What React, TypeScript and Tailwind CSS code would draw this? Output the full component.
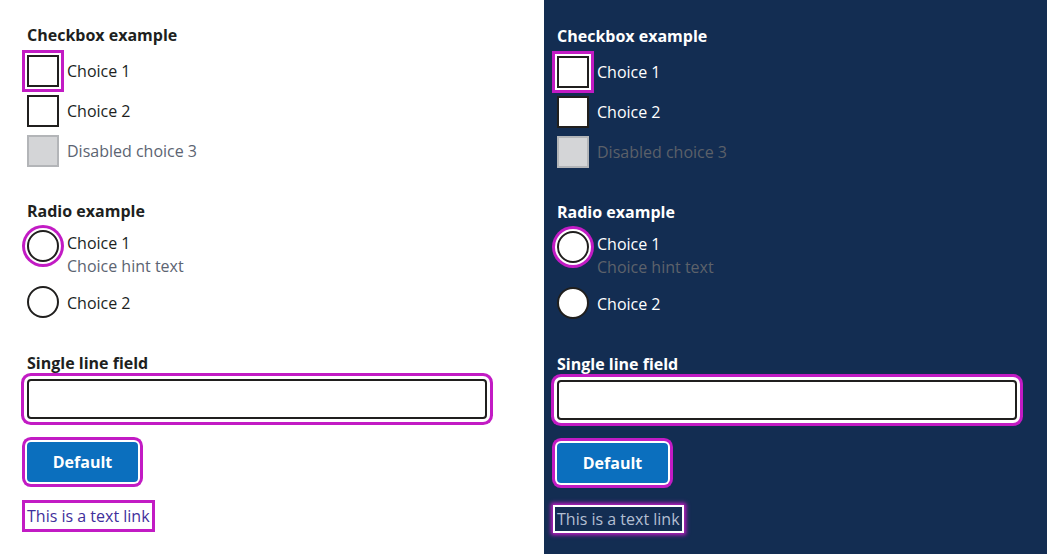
import React from "react";

function Checkbox({ label, focused, disabled, dark }: { label: string; focused?: boolean; disabled?: boolean; dark?: boolean }) {
  let box = "w-[32px] h-[32px] shrink-0 border-2 ";
  if (disabled) box += "bg-[#d4d5d7] border-[#b3b5b8]";
  else box += "bg-white border-[#201f1e]";
  if (focused) box += " shadow-[0_0_0_2px_#ffffff,0_0_0_5px_#c21bc4]";
  let text = "text-[16px] leading-[22px] ";
  if (disabled) text += dark ? "text-[#5b6069]" : "text-[#5c6472]";
  else text += dark ? "text-white" : "text-[#201f1e]";
  return (
    <div className="flex items-center gap-[8px] h-[32px]">
      <div className={box} />
      <span className={text}>{label}</span>
    </div>
  );
}

function Radio({ label, hint, focused, dark }: { label: string; hint?: string; focused?: boolean; dark?: boolean }) {
  let circ = "w-[32px] h-[32px] shrink-0 rounded-full border-2 border-[#201f1e] bg-white";
  if (focused) circ += " shadow-[0_0_0_2px_#ffffff,0_0_0_5px_#c21bc4]";
  return (
    <div className="flex items-start gap-[8px]">
      <div className={circ} />
      <div className={"flex flex-col " + (hint ? "pt-[2px]" : "pt-[6px]")}>
        <span className={"text-[16px] leading-[22px] " + (dark ? "text-white" : "text-[#201f1e]")}>{label}</span>
        {hint && (
          <span className={"text-[16px] leading-[24px] " + (dark ? "text-[#5d626b]" : "text-[#5c6472]")}>{hint}</span>
        )}
      </div>
    </div>
  );
}

function Panel({ dark }: { dark?: boolean }) {
  const head = "text-[16px] leading-[22px] font-bold " + (dark ? "text-white" : "text-[#201f1e]");
  return (
    <div
      className={
        "flex flex-col " +
        (dark ? "flex-1 bg-[#132d52] pl-[13px] pt-[25px]" : "w-[544px] bg-white pl-[27px] pt-[24px]")
      }
    >
      <div className={head}>Checkbox example</div>
      <div className="flex flex-col gap-[8px] mt-[9px]">
        <Checkbox label="Choice 1" focused dark={dark} />
        <Checkbox label="Choice 2" dark={dark} />
        <Checkbox label="Disabled choice 3" disabled dark={dark} />
      </div>
      <div className={head + " mt-[33px]"}>Radio example</div>
      <div className="flex flex-col gap-[8px] mt-[8px]">
        <Radio label="Choice 1" hint="Choice hint text" focused dark={dark} />
        <Radio label="Choice 2" dark={dark} />
      </div>
      <div className={head + " mt-[34px]"}>Single line field</div>
      <div className="mt-[5px] w-[460px] h-[40px] bg-white border-2 border-[#201f1e] rounded-[4px] shadow-[0_0_0_3px_#ffffff,0_0_0_6px_#c21bc4]" />
      <div className="mt-[23px]">
        <button className="w-[111px] h-[40px] rounded-[4px] bg-[#0b6fbe] text-white font-bold text-[16px] leading-[22px] shadow-[0_0_0_2px_#ffffff,0_0_0_5px_#c21bc4]">
          Default
        </button>
      </div>
      <div className={dark ? "mt-[22px] -ml-[4px]" : "mt-[18px] -ml-[5px]"}>
        {dark ? (
          <a className="inline-block border-2 border-white px-[2px] py-[1px] text-[16px] leading-[22px] text-[#b3bfd2] shadow-[0_0_4px_2px_#c21bc4] bg-[#132d52]">
            This is a text link
          </a>
        ) : (
          <a className="inline-block border-[3px] border-[#c21bc4] px-[2px] py-[2px] text-[16px] leading-[22px] text-[#3f2f9c]">
            This is a text link
          </a>
        )}
      </div>
    </div>
  );
}

export default function App() {
  return (
    <div
      className="flex w-[1047px] h-[554px] overflow-hidden"
      style={{ fontFamily: '"Open Sans", "Noto Sans", sans-serif' }}
    >
      <Panel />
      <Panel dark />
    </div>
  );
}
